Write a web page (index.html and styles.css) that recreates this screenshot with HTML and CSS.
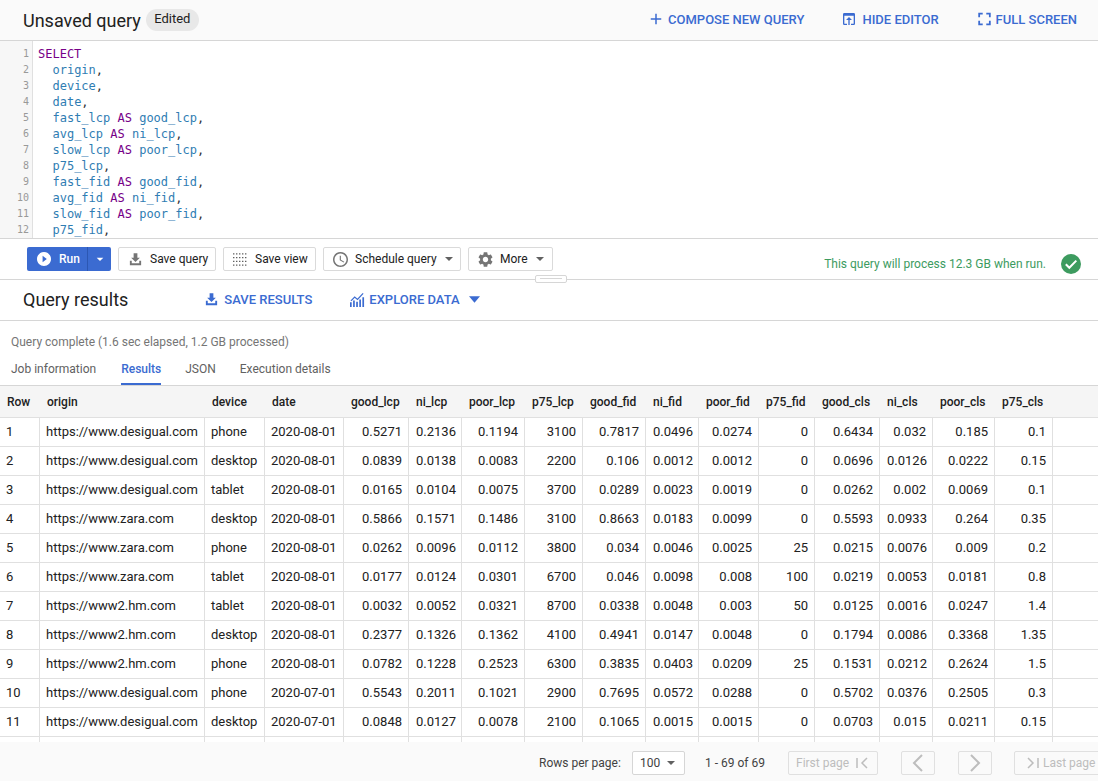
FILE: index.html
```html
<!DOCTYPE html>
<html lang="en">
<head>
<meta charset="utf-8">
<title>Unsaved query</title>
<link rel="stylesheet" href="styles.css">
</head>
<body>
<div class="page">
  <header class="topbar">
    <h1 class="title">Unsaved query</h1>
    <span class="chip">Edited</span>
    <div class="top-actions">
      <a class="link act-compose"><svg class="ic18" viewBox="0 0 24 24"><path d="M19 13h-6v6h-2v-6H5v-2h6V5h2v6h6v2z"/></svg>COMPOSE NEW QUERY</a>
      <a class="link act-hide"><svg class="ic18" viewBox="0 0 24 24"><path d="M5 3h14a2 2 0 0 1 2 2v14a2 2 0 0 1-2 2h-4v-2h4V7H5v12h4v2H5a2 2 0 0 1-2-2V5a2 2 0 0 1 2-2z"/><path d="M12 9l-4.500 4.500H11V21h2v-7.500h3.500z"/></svg>HIDE EDITOR</a>
      <a class="link act-full"><svg class="ic18" viewBox="3 3 18 18"><path d="M7 14H5v5h5v-2H7v-3zm-2-4h2V7h3V5H5v5zm12 7h-3v2h5v-5h-2v3zM14 5v2h3v3h2V5h-5z"/></svg>FULL SCREEN</a>
    </div>
  </header>

  <section class="editor">
    <div class="gutter">
      <span>1</span><span>2</span><span>3</span><span>4</span><span>5</span><span>6</span><span>7</span><span>8</span><span>9</span><span>10</span><span>11</span><span>12</span>
    </div>
    <pre class="code"><span class="kw">SELECT</span>
  <span class="id">origin</span>,
  <span class="id">device</span>,
  <span class="id">date</span>,
  <span class="id">fast_lcp</span> <span class="kw">AS</span> <span class="id">good_lcp</span>,
  <span class="id">avg_lcp</span> <span class="kw">AS</span> <span class="id">ni_lcp</span>,
  <span class="id">slow_lcp</span> <span class="kw">AS</span> <span class="id">poor_lcp</span>,
  <span class="id">p75_lcp</span>,
  <span class="id">fast_fid</span> <span class="kw">AS</span> <span class="id">good_fid</span>,
  <span class="id">avg_fid</span> <span class="kw">AS</span> <span class="id">ni_fid</span>,
  <span class="id">slow_fid</span> <span class="kw">AS</span> <span class="id">poor_fid</span>,
  <span class="id">p75_fid</span>,</pre>
  </section>

  <section class="toolbar">
    <div class="run">
      <span class="run-main"><svg class="ic18 white" viewBox="2 2 20 20"><path d="M12 2C6.480 2 2 6.480 2 12s4.480 10 10 10 10-4.480 10-10S17.520 2 12 2zm-2 14.500v-9l6 4.500-6 4.500z"/></svg>Run</span>
      <span class="run-drop"><svg class="ic18 white" viewBox="0 0 24 24"><path d="M7 10l5 5 5-5z"/></svg></span>
    </div>
    <button class="btn b-save"><svg class="ic16" viewBox="0 0 24 24"><path d="M9 2h6v7h4l-7 7-7-7h4z"/><path d="M3 14h3v4h12v-4h3v7H3z"/></svg>Save query</button>
    <button class="btn b-view"><svg class="ic16 dots" viewBox="0 0 16 16"><path d="M0 2h16M0 6h16M0 10h16M0 14h16"/></svg>Save view</button>
    <button class="btn b-sched"><svg class="ic16" viewBox="2 2 20 20"><path d="M11.990 2C6.470 2 2 6.480 2 12s4.470 10 9.990 10C17.520 22 22 17.520 22 12S17.520 2 11.990 2zM12 20c-4.420 0-8-3.580-8-8s3.580-8 8-8 8 3.580 8 8-3.580 8-8 8zm.5-13H11v6l5.250 3.150.75-1.230-4.500-2.670z"/></svg>Schedule query<svg class="caret" viewBox="0 0 10 5"><path d="M0 0l5 5 5-5z"/></svg></button>
    <button class="btn b-more"><svg class="ic16" viewBox="2 2 20 20"><path d="M19.140 12.940c.04-.3.06-.61.06-.94 0-.32-.02-.64-.07-.94l2.030-1.580c.18-.14.23-.41.12-.61l-1.920-3.320c-.12-.22-.37-.29-.59-.22l-2.390.96c-.5-.38-1.030-.7-1.620-.94l-.36-2.540c-.04-.24-.24-.41-.48-.41h-3.840c-.24 0-.43.17-.47.41l-.36 2.540c-.59.24-1.130.57-1.620.94l-2.390-.96c-.22-.08-.47 0-.59.22L2.740 8.870c-.12.21-.08.47.12.61l2.030 1.580c-.05.3-.09.63-.09.94s.02.64.07.94l-2.030 1.580c-.18.14-.23.41-.12.61l1.920 3.320c.12.22.37.29.59.22l2.390-.96c.5.38 1.030.7 1.620.94l.36 2.540c.05.24.24.41.48.41h3.840c.24 0 .44-.17.47-.41l.36-2.540c.59-.24 1.130-.56 1.620-.94l2.390.96c.22.08.47 0 .59-.22l1.920-3.320c.12-.22.07-.47-.12-.61l-2.010-1.580zM12 15.600c-1.980 0-3.600-1.620-3.600-3.600s1.620-3.600 3.600-3.600 3.600 1.620 3.600 3.600-1.620 3.600-3.600 3.600z"/></svg>More<svg class="caret" viewBox="0 0 10 5"><path d="M0 0l5 5 5-5z"/></svg></button>
    <div class="status">
      <span>This query will process 12.3 GB when run.</span>
      <svg class="check" viewBox="0 0 20 20"><circle cx="10" cy="10" r="10" fill="#3d9b5f"/><path d="M4.800 10.300l3.500 3.500 7-7.200" fill="none" stroke="#fff" stroke-width="2"/></svg>
    </div>
    <div class="handle"></div>
  </section>

  <section class="results-head">
    <h2 class="title">Query results</h2>
    <a class="link act-results"><svg class="ic16" viewBox="0 0 24 24"><path d="M9 2h6v7h4l-7 7-7-7h4z"/><path d="M3 14h3v4h12v-4h3v7H3z"/></svg>SAVE RESULTS</a>
    <a class="link act-explore"><svg class="ic16 chart" viewBox="0 0 16 16"><path d="M1 9.500l4-4 3 2.500 6-6.500" fill="none" stroke-width="1.300"/><path d="M0 11h1.800v5H0zM3.300 9h1.800v7H3.300zM6.600 10.500h1.800V16H6.600zM9.900 8h1.800v8H9.900zM13.200 5.500H15V16h-1.800z"/></svg>EXPLORE DATA<svg class="caret-lg" viewBox="0 0 12 7"><path d="M0 0l6 7 6-7z"/></svg></a>
  </section>

  <p class="complete">Query complete (1.6 sec elapsed, 1.2 GB processed)</p>

  <nav class="tabs">
    <span class="tab tab-job">Job information</span>
    <span class="tab active">Results</span>
    <span class="tab">JSON</span>
    <span class="tab">Execution details</span>
  </nav>

  <div class="table-wrap">
    <table class="grid">
      <thead>
        <tr><th>Row</th><th>origin</th><th>device</th><th>date</th><th>good_lcp</th><th>ni_lcp</th><th>poor_lcp</th><th>p75_lcp</th><th>good_fid</th><th>ni_fid</th><th>poor_fid</th><th>p75_fid</th><th>good_cls</th><th>ni_cls</th><th>poor_cls</th><th>p75_cls</th><th></th></tr>
      </thead>
      <tbody>
        <tr><td>1</td><td>https://www.desigual.com</td><td>phone</td><td>2020-08-01</td><td>0.5271</td><td>0.2136</td><td>0.1194</td><td>3100</td><td>0.7817</td><td>0.0496</td><td>0.0274</td><td>0</td><td>0.6434</td><td>0.032</td><td>0.185</td><td>0.1</td><td></td></tr>
        <tr><td>2</td><td>https://www.desigual.com</td><td>desktop</td><td>2020-08-01</td><td>0.0839</td><td>0.0138</td><td>0.0083</td><td>2200</td><td>0.106</td><td>0.0012</td><td>0.0012</td><td>0</td><td>0.0696</td><td>0.0126</td><td>0.0222</td><td>0.15</td><td></td></tr>
        <tr><td>3</td><td>https://www.desigual.com</td><td>tablet</td><td>2020-08-01</td><td>0.0165</td><td>0.0104</td><td>0.0075</td><td>3700</td><td>0.0289</td><td>0.0023</td><td>0.0019</td><td>0</td><td>0.0262</td><td>0.002</td><td>0.0069</td><td>0.1</td><td></td></tr>
        <tr><td>4</td><td>https://www.zara.com</td><td>desktop</td><td>2020-08-01</td><td>0.5866</td><td>0.1571</td><td>0.1486</td><td>3100</td><td>0.8663</td><td>0.0183</td><td>0.0099</td><td>0</td><td>0.5593</td><td>0.0933</td><td>0.264</td><td>0.35</td><td></td></tr>
        <tr><td>5</td><td>https://www.zara.com</td><td>phone</td><td>2020-08-01</td><td>0.0262</td><td>0.0096</td><td>0.0112</td><td>3800</td><td>0.034</td><td>0.0046</td><td>0.0025</td><td>25</td><td>0.0215</td><td>0.0076</td><td>0.009</td><td>0.2</td><td></td></tr>
        <tr><td>6</td><td>https://www.zara.com</td><td>tablet</td><td>2020-08-01</td><td>0.0177</td><td>0.0124</td><td>0.0301</td><td>6700</td><td>0.046</td><td>0.0098</td><td>0.008</td><td>100</td><td>0.0219</td><td>0.0053</td><td>0.0181</td><td>0.8</td><td></td></tr>
        <tr><td>7</td><td>https://www2.hm.com</td><td>tablet</td><td>2020-08-01</td><td>0.0032</td><td>0.0052</td><td>0.0321</td><td>8700</td><td>0.0338</td><td>0.0048</td><td>0.003</td><td>50</td><td>0.0125</td><td>0.0016</td><td>0.0247</td><td>1.4</td><td></td></tr>
        <tr><td>8</td><td>https://www2.hm.com</td><td>desktop</td><td>2020-08-01</td><td>0.2377</td><td>0.1326</td><td>0.1362</td><td>4100</td><td>0.4941</td><td>0.0147</td><td>0.0048</td><td>0</td><td>0.1794</td><td>0.0086</td><td>0.3368</td><td>1.35</td><td></td></tr>
        <tr><td>9</td><td>https://www2.hm.com</td><td>phone</td><td>2020-08-01</td><td>0.0782</td><td>0.1228</td><td>0.2523</td><td>6300</td><td>0.3835</td><td>0.0403</td><td>0.0209</td><td>25</td><td>0.1531</td><td>0.0212</td><td>0.2624</td><td>1.5</td><td></td></tr>
        <tr><td>10</td><td>https://www.desigual.com</td><td>phone</td><td>2020-07-01</td><td>0.5543</td><td>0.2011</td><td>0.1021</td><td>2900</td><td>0.7695</td><td>0.0572</td><td>0.0288</td><td>0</td><td>0.5702</td><td>0.0376</td><td>0.2505</td><td>0.3</td><td></td></tr>
        <tr><td>11</td><td>https://www.desigual.com</td><td>desktop</td><td>2020-07-01</td><td>0.0848</td><td>0.0127</td><td>0.0078</td><td>2100</td><td>0.1065</td><td>0.0015</td><td>0.0015</td><td>0</td><td>0.0703</td><td>0.015</td><td>0.0211</td><td>0.15</td><td></td></tr>
        <tr><td></td><td></td><td></td><td></td><td></td><td></td><td></td><td></td><td></td><td></td><td></td><td></td><td></td><td></td><td></td><td></td><td></td></tr>
      </tbody>
    </table>
  </div>

  <footer class="pager">
    <span class="pg-label">Rows per page:</span>
    <span class="pg-select">100<svg class="caret" viewBox="0 0 10 5"><path d="M0 0l5 5 5-5z"/></svg></span>
    <span class="pg-range">1 - 69 of 69</span>
    <span class="pg-btn pg-first">First page<svg class="pg-ic" viewBox="0 0 16 12"><path d="M3 1v10M13 1L8 6l5 5"/></svg></span>
    <span class="pg-btn pg-nav pg-prev"><svg class="pg-ic2" viewBox="0 0 12 18"><path d="M10 1L2 9l8 8"/></svg></span>
    <span class="pg-btn pg-nav pg-next"><svg class="pg-ic2" viewBox="0 0 12 18"><path d="M2 1l8 8-8 8"/></svg></span>
    <span class="pg-btn pg-last"><svg class="pg-ic" viewBox="0 0 16 12"><path d="M3 1l5 5-5 5M13 1v10"/></svg>Last page</span>
  </footer>
</div>
</body>
</html>
```

FILE: styles.css
```css
* { box-sizing: border-box; }
html, body { margin: 0; padding: 0; }
body { font-family: Roboto, "Liberation Sans", sans-serif; color: #212121; background: #fff; }
.page { width: 1098px; height: 781px; overflow: hidden; display: flex; flex-direction: column; position: relative; }

.topbar { flex: none; height: 41px; background: #fafafa; border-bottom: 1px solid #d6d6d6; display: flex; align-items: center; padding-left: 23px; }
.title { margin: 0; font-size: 18px; font-weight: 400; color: #212121; }
.chip { margin-left: 5px; height: 22px; width: 53px; text-align: center; border-radius: 11px; background: #e8e8e8; font-size: 13px; line-height: 20px; color: #212121; }
.top-actions { margin-left: auto; margin-top: -2px; display: flex; align-items: center; }
.link { display: flex; align-items: center; color: #3b6bd1; font-size: 13px; font-weight: 500; white-space: nowrap; }
.link svg { fill: #3b6bd1; }
.ic18 { width: 16px; height: 16px; margin-right: 4px; flex: none; }
.ic16 { width: 15px; height: 15px; margin-right: 7px; flex: none; fill: #757575; }
.act-hide { margin-left: 37px; }
.act-full { margin-left: 37px; margin-right: 21px; }
.act-compose .ic18 { width: 18px; height: 18px; margin-right: 3px; }
.act-hide .ic18 { margin-right: 5px; }
.act-full .ic18 { width: 17px; margin-right: 3px; }

.editor { flex: none; height: 197px; display: flex; overflow: hidden; background: #fff; }
.gutter { width: 33px; flex: none; background: #f7f7f7; border-right: 1px solid #e0e0e0; padding: 5px 3px 0 0; display: flex; flex-direction: column; align-items: flex-end; font: 10px/16px "DejaVu Sans Mono", monospace; color: #999; }
.code { margin: 0; padding: 5px 0 0 5px; font: 12px/16px "DejaVu Sans Mono", monospace; color: #333; }
.kw { color: #770088; }
.id { color: #2f7db3; }

.toolbar { flex: none; height: 42px; border-top: 1px solid #d6d6d6; border-bottom: 1px solid #d6d6d6; display: flex; align-items: center; padding-left: 27px; position: relative; }
.run { display: flex; height: 24px; width: 84px; background: #3b6bd1; border-radius: 2px; color: #fff; font-size: 12px; font-weight: 500; }
.run-main { width: 61px; display: flex; align-items: center; padding-left: 10px; border-right: 1px solid #2c57b3; }
.run-main .ic18 { width: 14px; height: 14px; margin-right: 8px; }
.run-drop { flex: 1; display: flex; align-items: center; justify-content: center; }
.run-drop .ic18 { margin: 0; }
.white { fill: #fff; }
.btn { height: 24px; margin-left: 7px; padding: 0 0 0 9px; background: #fff; border: 1px solid #dadada; border-radius: 2px; display: flex; align-items: center; font: 400 12px Roboto, sans-serif; color: #212121; white-space: nowrap; }
.b-save { width: 98px; }
.b-view { width: 93px; }
.b-sched { width: 138px; }
.b-more { width: 85px; }
.dots { fill: none; stroke: #616161; stroke-width: 1.500; stroke-dasharray: 1.500 1.700; }
.caret { width: 8px; height: 4px; margin-left: 8px; fill: #616161; flex: none; }
.status { margin-left: auto; margin-right: 17px; margin-top: 10px; display: flex; align-items: center; color: #3d9b5f; font-size: 12px; }
.check { width: 20px; height: 20px; margin-left: 15px; }
.handle { position: absolute; left: 535px; top: 36px; width: 32px; height: 8px; background: #fff; border: 1px solid #d6d6d6; border-radius: 2px; }
.handle::after { content: ""; display: block; margin: 2px 4px 0; height: 1px; background: #d6d6d6; }

.results-head { flex: none; height: 41px; padding-bottom: 2px; border-bottom: 1px solid #d6d6d6; display: flex; align-items: center; padding-left: 23px; }
.act-results { margin-left: 76px; }
.act-explore { margin-left: 38px; }
.act-results .ic16 { margin-right: 5px; }
.act-explore .ic16 { margin-right: 4px; }
.chart { stroke: #3b6bd1; }
.chart path + path { stroke: none; }
.caret-lg { width: 11px; height: 7px; margin-left: 9px; }

.complete { flex: none; margin: 0; height: 40px; padding: 14px 0 0 11px; font-size: 12px; line-height: 15px; color: #757575; }
.tabs { flex: none; height: 25px; display: flex; padding-left: 11px; border-bottom: 1px solid #d6d6d6; font-size: 12px; color: #616161; }
.tab { margin-right: 24px; height: 24px; padding-top: 1px; line-height: 15px; }
.tab-job { margin-right: 25px; }
.active { color: #3b6bd1; border-bottom: 2px solid #3b6bd1; font-weight: 500; }

.table-wrap { flex: 1; min-height: 0; overflow: hidden; }
.grid { border-collapse: separate; border-spacing: 0; table-layout: fixed; width: 1098px; font-size: 13px; }
.grid th { height: 32px; background: #f5f5f5; font-size: 12px; font-weight: 500; text-align: left; padding: 0 0 0 7px; border-bottom: 1px solid #e0e0e0; color: #212121; white-space: nowrap; }
.grid td { height: 29px; padding: 0 6px 2px 7px; border-right: 1px solid #e0e0e0; border-bottom: 1px solid #e0e0e0; text-align: right; white-space: nowrap; color: #212121; overflow: hidden; }
.grid td:nth-child(-n+4) { text-align: left; padding-left: 6px; padding-right: 0; }
.grid td:last-child { border-right: 0; }
.grid th:nth-child(1) { width: 40px; }
.grid th:nth-child(2) { width: 165px; }
.grid th:nth-child(3) { width: 60px; }
.grid th:nth-child(4) { width: 79px; }
.grid th:nth-child(5) { width: 65px; }
.grid th:nth-child(6) { width: 53px; }
.grid th:nth-child(7) { width: 63px; }
.grid th:nth-child(8) { width: 58px; }
.grid th:nth-child(9) { width: 63px; }
.grid th:nth-child(10) { width: 53px; }
.grid th:nth-child(11) { width: 60px; }
.grid th:nth-child(12) { width: 56px; }
.grid th:nth-child(13) { width: 65px; }
.grid th:nth-child(14) { width: 53px; }
.grid th:nth-child(15) { width: 62px; }
.grid th:nth-child(16) { width: 58px; }
.grid th:nth-child(17) { width: 45px; }

.pager { flex: none; height: 39px; padding-top: 3px; background: #fafafa; display: flex; align-items: center; padding-left: 539px; font-size: 12px; color: #424242; white-space: nowrap; overflow: hidden; }
.pg-label { flex: none; width: 82px; }
.pg-select { flex: none; margin-left: 11px; width: 53px; height: 24px; padding-left: 7px; background: #fff; border: 1px solid #d6d6d6; border-radius: 2px; display: flex; align-items: center; }
.pg-select .caret { margin-left: 7px; }
.pg-range { flex: none; margin-left: 20px; width: 83px; }
.pg-btn { height: 24px; border: 1px solid #e0e0e0; border-radius: 2px; color: #bdbdbd; display: flex; align-items: center; flex: none; }
.pg-first { width: 90px; padding-left: 7px; }
.pg-nav { width: 34px; justify-content: center; }
.pg-prev { margin-left: 23px; }
.pg-next { margin-left: 23px; }
.pg-last { margin-left: 22px; width: 90px; padding-left: 10px; }
.pg-ic { width: 16px; height: 12px; fill: none; stroke: #bdbdbd; stroke-width: 1.500; margin: 0 4px 0 5px; flex: none; }
.pg-last .pg-ic { margin: 0 2px 0 0; }
.pg-ic2 { width: 12px; height: 18px; fill: none; stroke: #bdbdbd; stroke-width: 2; }
```
